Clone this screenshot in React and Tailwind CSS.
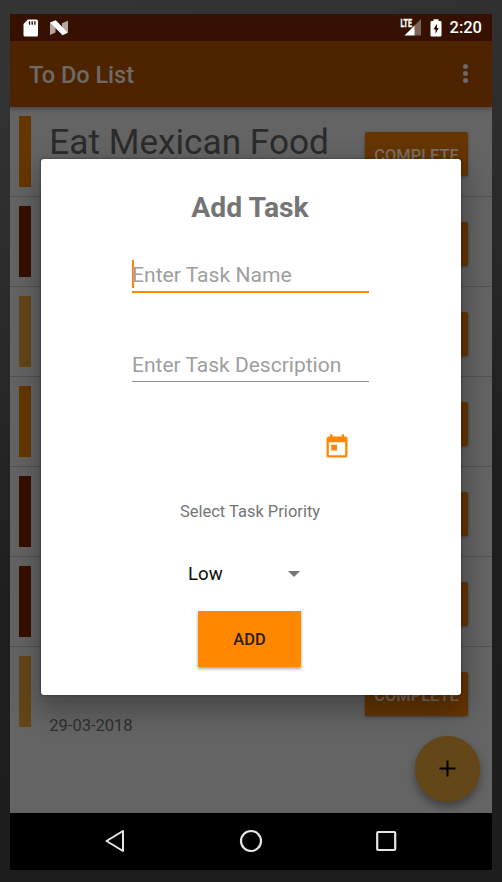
import React from "react";

const tasks = [
  { color: "bg-[#663600]", title: "Eat Mexican Food" },
  { color: "bg-[#361000]" },
  { color: "bg-[#644718]" },
  { color: "bg-[#663600]" },
  { color: "bg-[#361000]" },
  { color: "bg-[#361000]" },
  { color: "bg-[#644718]", date: "29-03-2018" },
];

function StatusBar() {
  return (
    <div className="flex h-[27px] shrink-0 items-center justify-between bg-[#361000] pl-[13px] pr-[10px]">
      <div className="flex items-center gap-3">
        <svg width="15" height="18" viewBox="0 0 15 18">
          <path d="M5 0.5H13.500Q15 0.500 15 2V16Q15 17.500 13.500 17.500H2Q0.500 17.500 0.500 16V5Z" fill="#fff" />
          <path d="M5.800 2.300h1.400v3.500H5.800zM8.500 2.300h1.400v3.500H8.500zM11.200 2.300h1.400v3.500h-1.400z" fill="#361000" />
        </svg>
        <svg width="19" height="16" viewBox="0 0 19 16">
          <path d="M0 2.500L5.500 1V12.500L0 15zM18 0.800V12.500L12 14V3.200z" fill="#b8a7a0" />
          <path d="M0.200 2.500L5.800 0.300L17.800 12.800L12.500 15.300Z" fill="#fff" />
        </svg>
      </div>
      <div className="flex items-center">
        <svg width="22" height="19" viewBox="0 0 22 19">
          <path d="M21 1V17.500H14V8Z" fill="#7d6258" />
          <path d="M14.500 7.500V17.500H4.500Z" fill="#fff" />
          <text x="0.500" y="9.200" fill="#fff" stroke="#fff" strokeWidth="0.350" fontFamily="Roboto, sans-serif" fontWeight="700" fontSize="11" textLength="11.500" lengthAdjust="spacingAndGlyphs">LTE</text>
        </svg>
        <svg className="ml-2" width="12" height="18" viewBox="0 0 12 18">
          <path d="M3.500 0.300h5V2H10.300Q11.500 2 11.500 3.200V16.300Q11.500 17.500 10.300 17.500H1.700Q0.500 17.500 0.500 16.300V3.200Q0.500 2 1.700 2H3.500Z" fill="#fff" />
          <path d="M7 4.800L3.400 10.500H5.500V14.800L8.700 9H7Z" fill="#361000" />
        </svg>
        <span className="ml-2 pt-px text-[16.500px] leading-5 font-medium text-white">2:20</span>
      </div>
    </div>
  );
}

function AppBar() {
  return (
    <div className="z-10 flex h-[66px] shrink-0 items-center justify-between bg-[#4e2400] pl-[19px] pr-[24px] pt-[2px] shadow-[0_2px_4px_rgba(0,0,0,0.3)]">
      <h1 className="text-[23.500px] leading-7 font-medium text-[#6d6a68]">To Do List</h1>
      <div className="mb-[3px] flex flex-col gap-[2px]">
        <i className="size-[5px] rounded-full bg-[#6b6967]" />
        <i className="size-[5px] rounded-full bg-[#6b6967]" />
        <i className="size-[5px] rounded-full bg-[#6b6967]" />
      </div>
    </div>
  );
}

function TaskRow({ task, last }) {
  return (
    <li className={`flex h-[90px] items-start pl-[9px] pr-6 pt-[9px] ${last ? "" : "border-b border-[#525252]"}`}>
      <span className={`h-[70.500px] w-[11.800px] shrink-0 ${task.color}`} />
      <div className="ml-[18.500px] flex h-[70px] grow flex-col justify-between">
        <span className="mt-[5px] text-[35.200px] leading-[42px] whitespace-nowrap text-[#2b2b2b]">{task.title}</span>
        <span className="-mb-[10px] text-[16.500px] leading-5 text-[#2f2f2f]">{task.date}</span>
      </div>
      <button className="mt-4 h-11 w-[103px] shrink-0 rounded-[2px] bg-[#663600] pt-[4px] text-[16.400px] font-medium text-[#7a7068] shadow-[0_1px_3px_rgba(0,0,0,0.35)]">
        COMPLETE
      </button>
    </li>
  );
}

function AddTaskDialog() {
  return (
    <div className="absolute top-[145px] left-[30.500px] flex h-[536px] w-[420px] flex-col items-center rounded-[3px] bg-white shadow-[0_12px_28px_4px_rgba(0,0,0,0.3),0_0_2px_1px_rgba(0,0,0,0.2)]">
      <h2 className="mt-[32px] -ml-px text-[28.300px] leading-[34px] font-bold text-[#757575]">Add Task</h2>
      <div className="mt-[35px] flex h-[33px] w-[237px] items-start border-b-2 border-[#ff8800]">
        <span className="h-7 w-[2px] bg-[#ff8800]" />
        <span className="-ml-[2px] mt-[2px] text-[21.100px] leading-[26px] text-[#9e9e9e]">Enter Task Name</span>
      </div>
      <div className="mt-[56px] flex h-[33px] w-[237px] items-start border-b border-[#8e8e8e]">
        <span className="mt-[3px] text-[21px] leading-[26px] text-[#9e9e9e]">Enter Task Description</span>
      </div>
      <svg className="mt-[51px] ml-[172px]" width="28" height="28" viewBox="0 0 24 24" fill="#ff8800">
        <path d="M19 3h-1V1h-2v2H8V1H6v2H5c-1.110 0-1.990.9-1.990 2L3 19c0 1.100.89 2 2 2h14c1.100 0 2-.9 2-2V5c0-1.100-.9-2-2-2zm0 16H5V8h14v11zM7 10h5v5H7z" />
      </svg>
      <p className="mt-[41px] -ml-px text-[16.500px] leading-5 text-[#757575]">Select Task Priority</p>
      <div className="mt-[40px] -ml-[13px] flex w-[112px] items-center justify-between">
        <span className="text-[18.700px] leading-6 text-[#0c0c0c]">Low</span>
        <svg width="12" height="6" viewBox="0 0 12 6"><path d="M0 0H12L6 6Z" fill="#757575" /></svg>
      </div>
      <button className="mt-[25px] -ml-[2px] h-[56px] w-[103px] bg-[#ff8800] pt-[2px] text-[16.400px] font-medium text-[#2b1b08] shadow-[0_2px_3px_rgba(0,0,0,0.35)]">ADD</button>
    </div>
  );
}

function NavBar() {
  return (
    <div className="flex h-[57px] shrink-0 items-center justify-between bg-black pr-[94px] pb-[2px] pl-[93px]">
      <svg width="24" height="24" viewBox="0 0 24 24" fill="none" stroke="#e6e6e6" strokeWidth="2" strokeLinejoin="round"><path d="M20 2V22L3.500 12Z" /></svg>
      <svg width="24" height="24" viewBox="0 0 24 24" fill="none" stroke="#e6e6e6" strokeWidth="2.200"><circle cx="12" cy="12" r="10" /></svg>
      <svg width="24" height="24" viewBox="0 0 24 24" fill="none" stroke="#e6e6e6" strokeWidth="2.200"><rect x="3.200" y="3" width="18" height="18" rx="1" /></svg>
    </div>
  );
}

export default function App() {
  return (
    <div className="h-[882px] w-[502px] bg-[linear-gradient(165deg,#353536_0%,#2b2b2b_30%,#1e1e1e_60%,#1d1d1d_100%)] px-[10px] pt-[14px] font-[Roboto,sans-serif]">
      <div className="relative flex h-[856px] w-[482px] flex-col overflow-hidden bg-[#646464]">
        <StatusBar />
        <AppBar />
        <ul className="h-[706px] shrink-0">
          {tasks.map((task, i) => (
            <TaskRow key={i} task={task} last={i === tasks.length - 1} />
          ))}
        </ul>
        <NavBar />
        <button className="absolute top-[722px] left-[404.500px] flex size-[65.500px] items-center justify-center rounded-full bg-[#644718] shadow-[0_5px_9px_rgba(0,0,0,0.35)]">
          <svg width="17" height="17" viewBox="0 0 17 17" stroke="#000" strokeWidth="2"><path d="M8.500 0.500V16.500M0.500 8.500H16.500" /></svg>
        </button>
        <AddTaskDialog />
      </div>
    </div>
  );
}
